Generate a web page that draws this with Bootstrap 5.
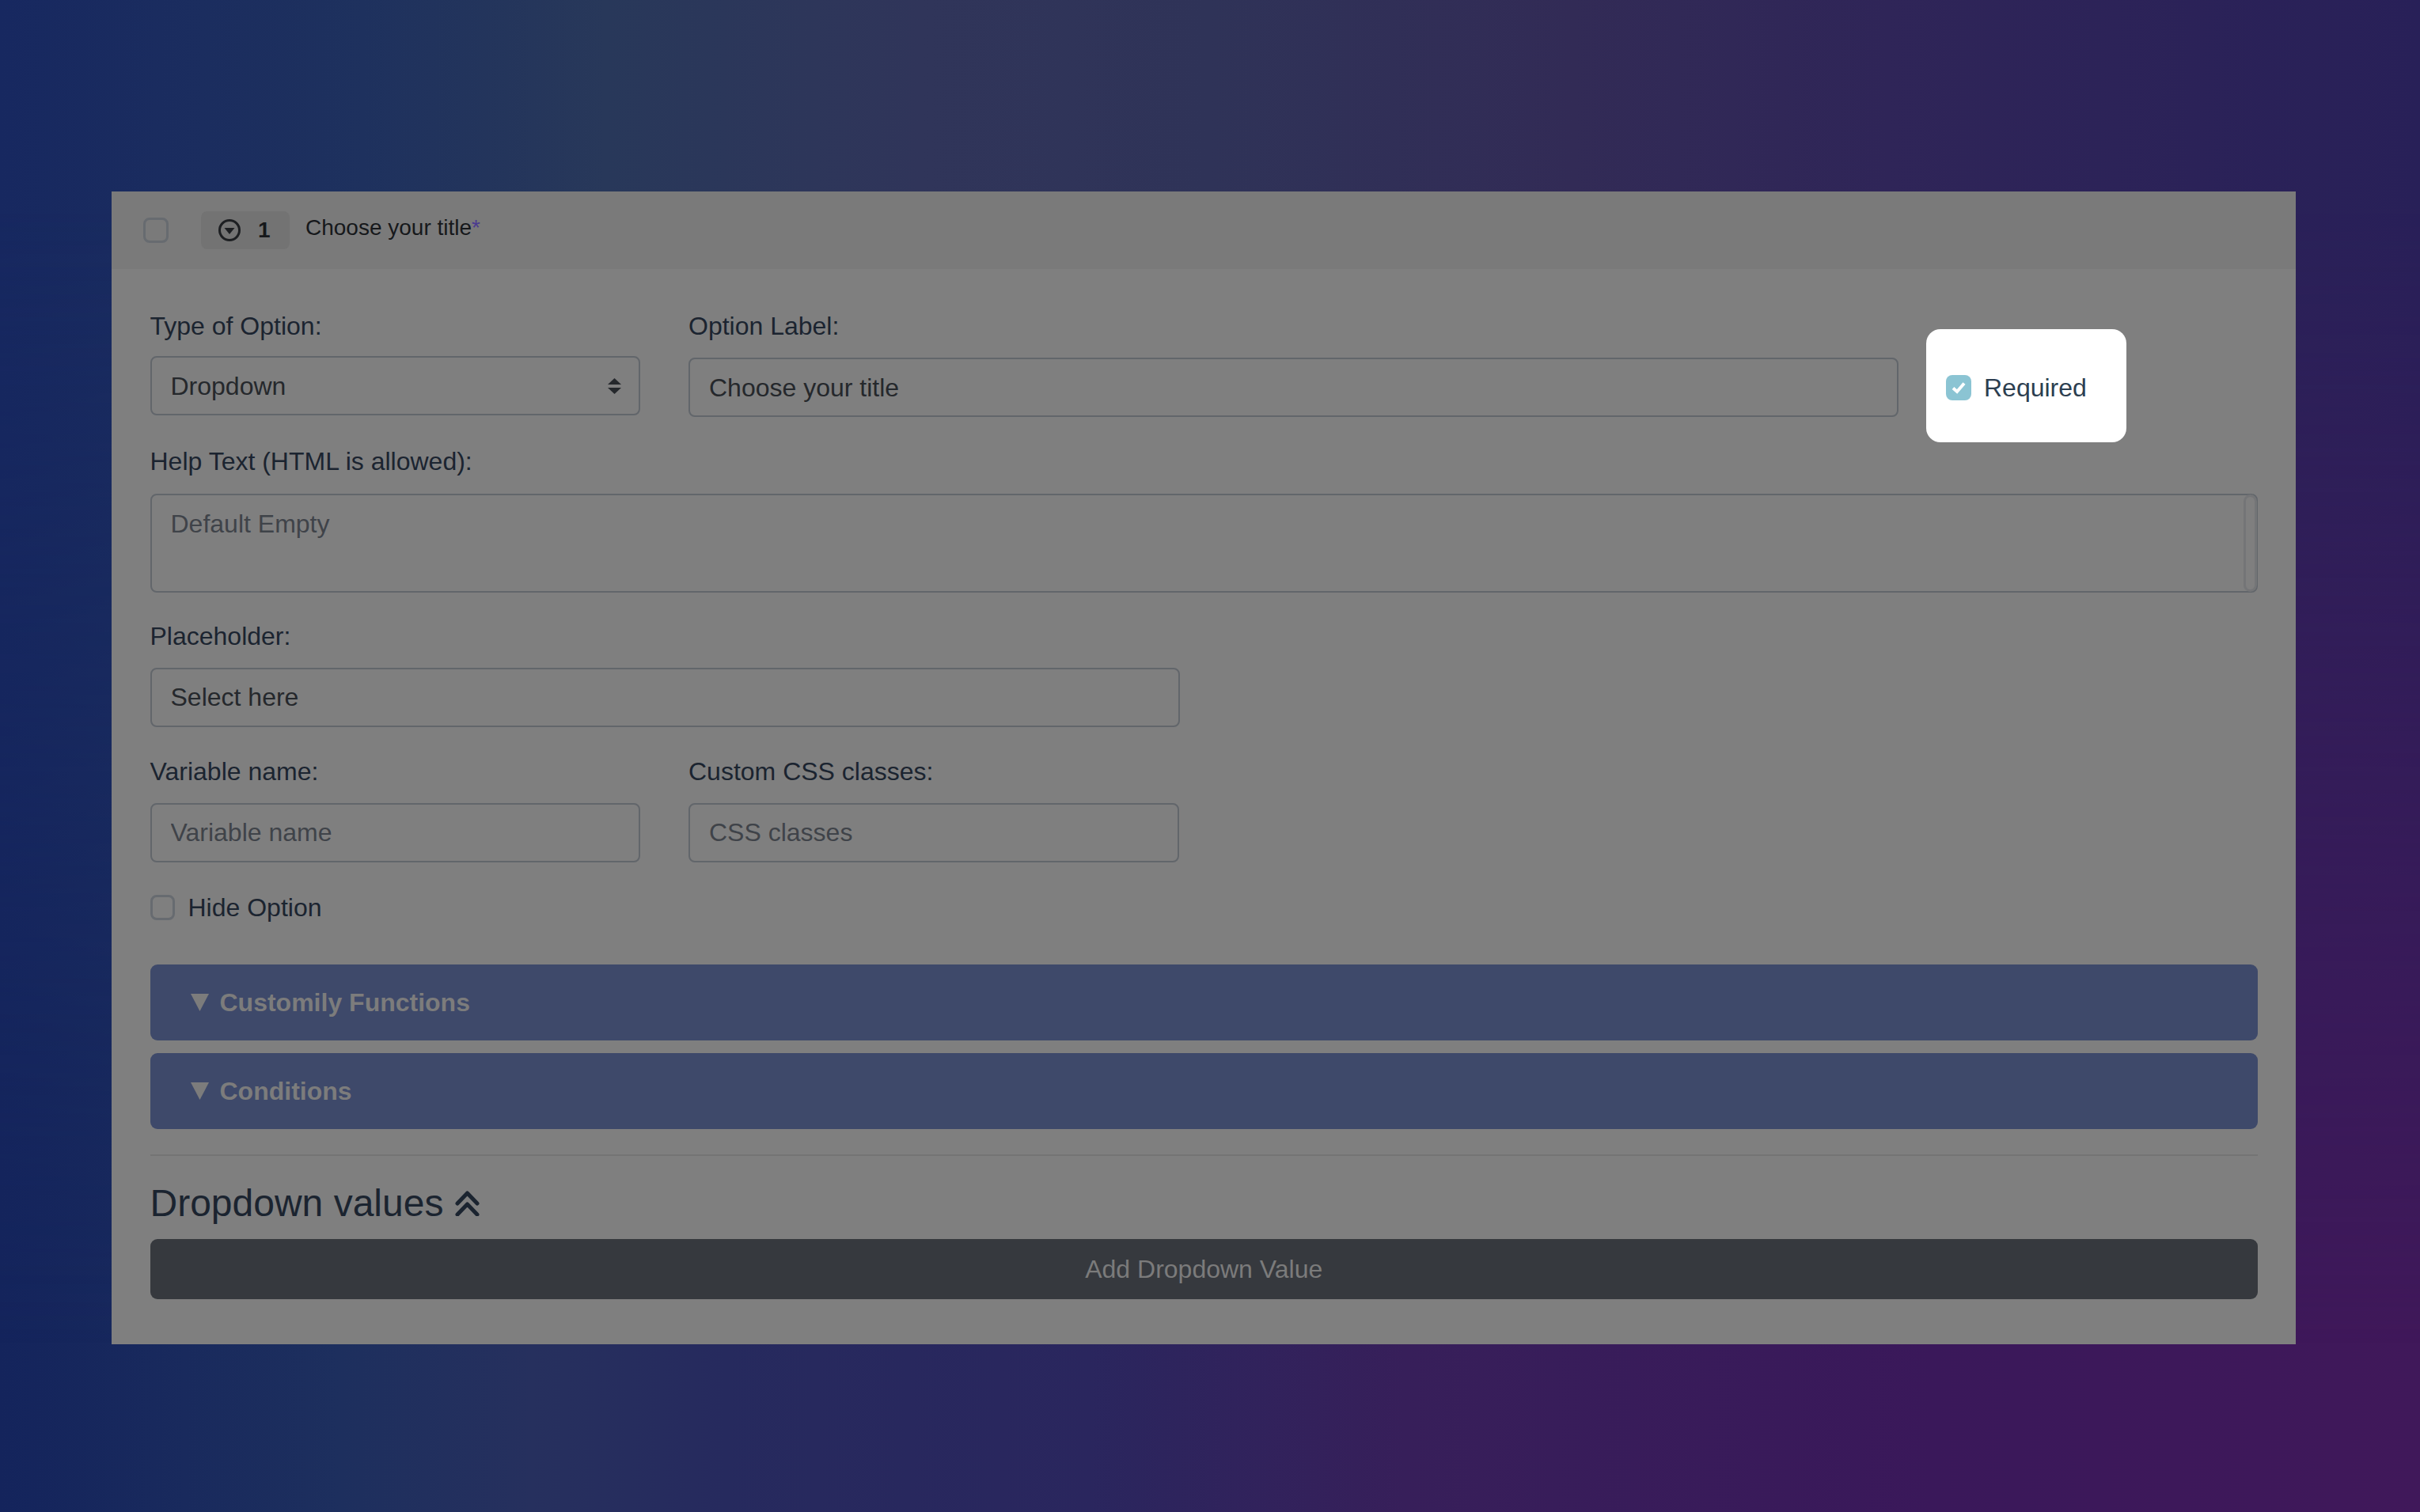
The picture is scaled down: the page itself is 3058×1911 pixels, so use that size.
<!DOCTYPE html>
<html lang="en">
<head>
<meta charset="utf-8">
<title>Option</title>
<link href="https://cdn.jsdelivr.net/npm/bootstrap@5.3.0/dist/css/bootstrap.min.css" rel="stylesheet">
<style>
html,body{height:100%;}
body{margin:0;width:3058px;height:1911px;overflow:hidden;font-family:"Liberation Sans",Arial,sans-serif;color:#1b2430;
 padding:242px 157px 0 141px;
 background:linear-gradient(90deg,#14245c 0%,#1d2f5e 14%,#26305e 22%,#262a5e 30%,#2a265e 45%,#371f5a 58%,#3a185a 80%,#40185a 100%);}
body::before{content:"";position:absolute;inset:0;z-index:-1;
 background:linear-gradient(90deg,#172860 0%,#1e315e 15%,#28385a 25%,#30355a 38%,#2f3358 50%,#322b56 65%,#2f2558 78%,#282058 100%);
 -webkit-mask-image:linear-gradient(to bottom,#000 0,#000 250px,transparent 1700px);mask-image:linear-gradient(to bottom,#000 0,#000 250px,transparent 1700px);}
.opt-panel{width:2760px;height:1457px;border:0;border-radius:0;background:#7f7f7f;}
.opt-head{height:98px;background:#7a7a7a;border:0;border-radius:0!important;padding:25px 0 0 40px;font-size:28px;line-height:36px;color:#16181b;}
.opt-check{width:32px;height:32px;margin:8px 41px 0 0;flex:none;border:3px solid #676b70;border-radius:8px;background:transparent;}
.opt-pill{width:112px;height:48px;margin-right:20px;background:#737373;border-radius:8px;padding-left:21px;font-weight:700;}
.opt-pill svg{width:30px;height:30px;margin-right:21px;}
.opt-title{margin-top:3px;}
.opt-star{color:#4a3a90;}
.opt-body{padding:48px 48px 0 48.500px;font-size:32px;}
.opt-label{display:block;margin:0;font-size:32px;line-height:48px;color:#1b2430;}
.opt-input{height:75px;border:2px solid #62666b;border-radius:8px;background-color:transparent!important;font-size:32px;line-height:40px;padding:0 24px;color:#25282c;box-shadow:none;}
.opt-input::placeholder{color:#3f4349;opacity:1;}
.opt-select{background-image:url("data:image/svg+xml,%3Csvg xmlns='http://www.w3.org/2000/svg' viewBox='0 0 17 20'%3E%3Cpath fill='%2325282c' d='M8.5 0 17 8H0zM8.5 20 0 12h17z'/%3E%3C/svg%3E");background-size:17px 20px;background-position:right 22px center;background-repeat:no-repeat;}
.opt-c1{width:619.500px;}
.opt-c2{width:1529px;}
.opt-gap{gap:61px;}
.opt-lift{margin-top:14px;}
.opt-lift2{margin-top:16px;}
.opt-drop{margin-top:16px;padding-top:2px;}
.opt-spot{width:253px;height:143px;margin:28px 0 0 -26px;background:#fff;border-radius:18px;padding:5px 0 0 25px;color:#2c3e50;gap:16px;}
.opt-tick{width:32px;height:32px;border-radius:8px;background:#8bc4d3;flex:none;}
.opt-area{height:125px;margin-top:17px;padding-top:16px;resize:none;}
.opt-areawrap{position:relative;}
.opt-scroll{position:absolute;right:1px;top:1px;bottom:1px;width:17px;border:3px solid #747577;border-radius:9px;}
.opt-half{width:1301.500px;}
.opt-b31{margin-top:31px;}
.opt-b31b{margin-top:32px;}
.opt-hide{margin-top:41px;height:32px;gap:17px;line-height:32px;}
.opt-hide .opt-check{margin:0;width:31px;}
.opt-bar{height:96px;margin-top:16px;border-radius:9px;background:#3e496a;color:#7c7c7c;font-weight:700;padding-left:51px;gap:14px;}
.opt-bar svg{width:23px;height:22px;}
.opt-first{margin-top:56px;}
.opt-rule{margin:32px 0 0;border:0;border-top:2px solid #747474;opacity:1;}
.opt-h{margin:30px 0 0;font-size:48px;line-height:60px;font-weight:400;color:#1b2430;gap:15px;}
.opt-h svg{width:31px;height:32px;}
.opt-add{display:block;width:100%;height:76px;margin-top:15px;border:0;border-radius:9px;background:#36393e!important;color:#7b7b7b!important;font-size:32px;padding:0;}
</style>
</head>
<body>
<div class="card opt-panel">
  <div class="card-header d-flex align-items-start opt-head">
    <span class="d-block opt-check"></span>
    <span class="d-flex align-items-center opt-pill"><svg viewBox="0 0 30 30"><circle cx="15" cy="15" r="12.5" fill="none" stroke="#1d1f22" stroke-width="3"/><path d="M8.5 12h13L15 20z" fill="#1d1f22"/></svg>1</span>
    <span class="opt-title">Choose your title<span class="opt-star">*</span></span>
  </div>
  <div class="card-body opt-body">
    <div class="d-flex opt-gap">
      <div class="opt-c1">
        <label class="opt-label">Type of Option:</label>
        <div class="form-control opt-input opt-select d-flex align-items-center opt-lift">Dropdown</div>
      </div>
      <div class="opt-c2">
        <label class="opt-label">Option Label:</label>
        <input class="form-control opt-input opt-drop" value="Choose your title">
      </div>
      <div class="d-flex align-items-center opt-spot">
        <span class="d-flex align-items-center justify-content-center opt-tick"><svg width="18" height="16" viewBox="0 0 18 16"><path d="M2 8.5 7 13 16 2.500" fill="none" stroke="#fff" stroke-width="4"/></svg></span>
        <span>Required</span>
      </div>
    </div>
    <label class="opt-label">Help Text (HTML is allowed):</label>
    <div class="opt-areawrap">
      <textarea class="form-control opt-input opt-area" placeholder="Default Empty"></textarea>
      <span class="d-block opt-scroll"></span>
    </div>
    <label class="opt-label opt-b31">Placeholder:</label>
    <input class="form-control opt-input opt-half mt-3" value="Select here">
    <div class="d-flex opt-gap opt-b31b">
      <div class="opt-c1">
        <label class="opt-label">Variable name:</label>
        <input class="form-control opt-input opt-lift2" placeholder="Variable name">
      </div>
      <div class="opt-c1">
        <label class="opt-label">Custom CSS classes:</label>
        <input class="form-control opt-input opt-lift2" placeholder="CSS classes">
      </div>
    </div>
    <div class="d-flex align-items-center opt-hide">
      <span class="d-block opt-check"></span><span>Hide Option</span>
    </div>
    <div class="d-flex align-items-center opt-bar opt-first"><svg viewBox="0 0 23 22"><path d="M0 0h23L11.500 22z" fill="#7c7c7c"/></svg>Customily Functions</div>
    <div class="d-flex align-items-center opt-bar"><svg viewBox="0 0 23 22"><path d="M0 0h23L11.500 22z" fill="#7c7c7c"/></svg>Conditions</div>
    <hr class="opt-rule">
    <h2 class="d-flex align-items-center opt-h">Dropdown values <svg viewBox="0 0 31 32"><path d="M3 16 15.500 3 28 16M3 30 15.500 17 28 30" fill="none" stroke="#1b2430" stroke-width="5" stroke-linecap="round" stroke-linejoin="round"/></svg></h2>
    <button class="btn btn-dark opt-add" type="button">Add Dropdown Value</button>
  </div>
</div>
<script src="https://cdn.jsdelivr.net/npm/bootstrap@5.3.0/dist/js/bootstrap.bundle.min.js"></script>
</body>
</html>
